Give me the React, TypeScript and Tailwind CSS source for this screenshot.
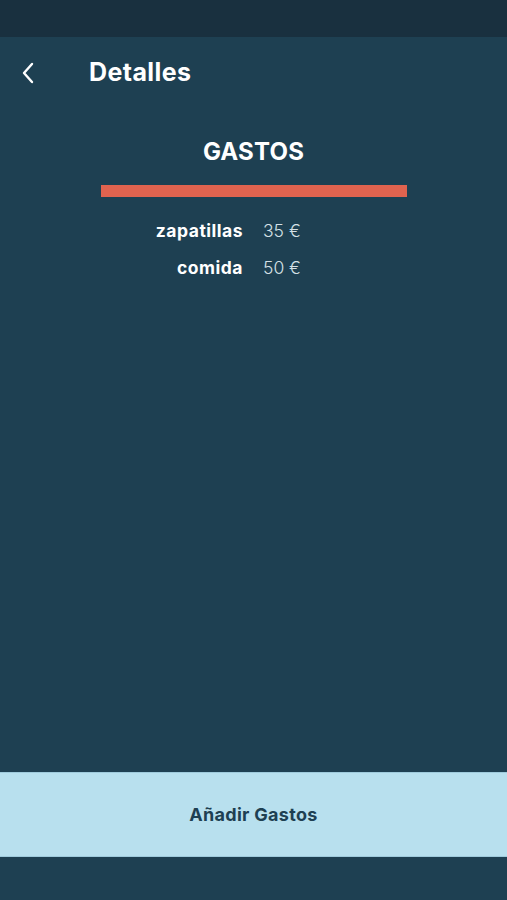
import React from "react";

const gastos = [
  { name: "zapatillas", amount: "35 €" },
  { name: "comida", amount: "50 €" },
];

const App = () => {
  return (
    <div className="flex flex-col h-[900px] w-full bg-[#1e4052] font-['Inter',sans-serif] text-white">
      <div className="h-[37px] bg-[#19303f]" />
      <div className="flex items-center h-[72px] pl-[20px]">
        <svg width="16" height="22" viewBox="0 0 16 22" fill="none" className="shrink-0">
          <path d="M12 2L4 11l8 9" stroke="#ffffff" strokeWidth="2.4" strokeLinecap="round" strokeLinejoin="round" />
        </svg>
        <h1 className="ml-[53px] text-[25px] font-bold tracking-[0.4px]">Detalles</h1>
      </div>
      <div className="flex-1 flex flex-col">
        <h2 className="mt-[28px] text-center text-[24px] font-bold leading-[30px] tracking-[0.2px]">GASTOS</h2>
        <div className="mx-auto mt-[18px] h-[12px] w-[306px] bg-[#e0634f]" />
        <div className="mt-[22px] grid grid-cols-[243px_1fr] gap-x-[20px] gap-y-[13px] text-[17.5px] leading-[24px]">
          {gastos.map((g) => (
            <React.Fragment key={g.name}>
              <span className="text-right font-bold tracking-[0.5px]">{g.name}</span>
              <span className="font-light text-[#d4e0e6]">{g.amount}</span>
            </React.Fragment>
          ))}
        </div>
      </div>
      <button className="h-[85px] w-full bg-[#b8e0ee] border-y border-[#9fcbdc] text-[18px] font-bold tracking-[0.3px] text-[#1e4052]">
        Añadir Gastos
      </button>
      <div className="h-[43px]" />
    </div>
  );
};

export default App;
